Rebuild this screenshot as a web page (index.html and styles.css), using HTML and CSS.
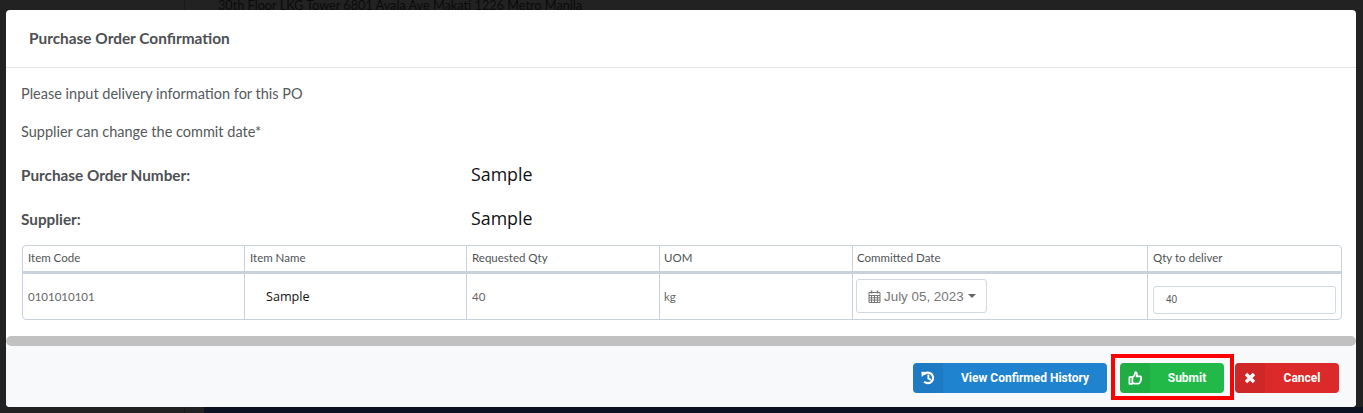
FILE: index.html
```html
<!DOCTYPE html>
<html lang="en">
<head>
  <meta charset="UTF-8" />
  <title>Purchase Order Confirmation</title>
  <meta name="viewport" content="width=device-width, initial-scale=1.0" />
  <link rel="stylesheet" href="styles.css">
</head>
<body>

<div class="backdrop">
  <div class="backdrop-top">
    <div class="backdrop-side"></div>
    <div class="backdrop-address">30th Floor LKG Tower 6801 Ayala Ave Makati 1226 Metro Manila</div>
  </div>
  <div class="backdrop-bottom">
    <div class="backdrop-side"></div>
    <div class="backdrop-gap"></div>
    <div class="backdrop-navy"></div>
  </div>
</div>

<div class="modal">
  <header class="modal-header">
    <h1>Purchase Order Confirmation</h1>
  </header>

  <section class="modal-body">
    <p class="note">Please input delivery information for this PO</p>
    <p class="note note-second">Supplier can change the commit date*</p>

    <div class="info-row info-po">
      <strong>Purchase Order Number:</strong>
      <span>Sample</span>
    </div>
    <div class="info-row info-supplier">
      <strong>Supplier:</strong>
      <span>Sample</span>
    </div>

    <table class="items">
      <thead>
        <tr>
          <th class="col-code">Item Code</th>
          <th class="col-name">Item Name</th>
          <th class="col-qty">Requested Qty</th>
          <th class="col-uom">UOM</th>
          <th class="col-date">Committed Date</th>
          <th>Qty to deliver</th>
        </tr>
      </thead>
      <tbody>
        <tr>
          <td>0101010101</td>
          <td class="cell-name">Sample</td>
          <td>40</td>
          <td class="cell-uom">kg</td>
          <td>
            <button class="date-picker" type="button">
              <svg class="cal-icon" viewBox="0 0 13 13" width="13" height="13">
                <path fill="none" stroke="#777" d="M1 2.5h11v10H1zM1 5.5h11M1 7.8h11M1 10.1h11M3.5 5.5v7M6.5 5.5v7M9.5 5.5v7"/>
                <path fill="none" stroke="#777" stroke-width="1.4" d="M3.5 0.5v3M9.5 0.5v3"/>
              </svg>
              <span>July 05, 2023</span>
              <i class="caret"></i>
            </button>
          </td>
          <td><input class="qty-input" type="text" value="40" /></td>
        </tr>
      </tbody>
    </table>
  </section>

  <div class="scrollbar"></div>

  <footer class="modal-footer">
    <button class="action action-blue" type="button">
      <span class="action-icon">
        <svg viewBox="0 0 14 14" width="14" height="14">
          <path fill="none" stroke="#fff" stroke-width="2.2" d="M2.8 3.4A5.3 5.3 0 1 1 3.2 10.8"/>
          <path fill="#fff" d="M0.4 0.8l5.4 0.2-5 5z"/>
          <path fill="none" stroke="#fff" stroke-width="1.9" d="M7.4 3.6v3.8l2.5 1.6"/>
        </svg>
      </span>
      <span class="action-label">View Confirmed History</span>
    </button>
    <button class="action action-green highlight" type="button">
      <span class="action-icon">
        <svg viewBox="0 0 14 14" width="14" height="14">
          <path fill="none" stroke="#fff" stroke-width="1.7" stroke-linejoin="round" d="M4.4 6.2h-3v6.6h3zM4.4 6.4c1.6-1 2.8-2.6 3-5.4 1.6 0 2 1.8 1.2 4.4h3.4c1.2 0 1.4 1.2 0.9 1.9 0.5 0.8 0.3 1.6-0.3 2 0.2 0.8-0.1 1.5-0.7 1.8 0 0.9-0.5 1.5-1.4 1.5H6.6c-1 0-1.4-0.5-2.2-0.6"/>
        </svg>
      </span>
      <span class="action-label">Submit</span>
    </button>
    <button class="action action-red" type="button">
      <span class="action-icon">
        <svg viewBox="0 0 12 12" width="12" height="12">
          <path fill="none" stroke="#fff" stroke-width="3.4" d="M2 2l8 8M10 2l-8 8"/>
        </svg>
      </span>
      <span class="action-label">Cancel</span>
    </button>
  </footer>
</div>

</body>
</html>
```

FILE: styles.css
```css
:root {
  --text: #55595c;
  --line: #c9d1dc;
  --blue: #2083d0;
  --green: #22b949;
  --red: #dc2a2a;
}

* {
  box-sizing: border-box;
}

html, body {
  height: 100%;
}

body {
  margin: 0;
  position: relative;
  overflow: hidden;
  background: #222;
  font-family: 'Lato', sans-serif;
  color: var(--text);
}

/* page behind the modal */
.backdrop {
  height: 413px;
  display: flex;
  flex-direction: column;
  justify-content: space-between;
}

.backdrop-top {
  display: flex;
  height: 10px;
  overflow: hidden;
}

.backdrop-side {
  width: 185px;
  border-right: 1px solid #1a1a1a;
}

.backdrop-address {
  padding-left: 33px;
  margin-top: -2px;
  font-size: 12.7px;
  line-height: 15px;
  color: #0b0b0b;
  white-space: nowrap;
}

.backdrop-bottom {
  display: flex;
  height: 6px;
}

.backdrop-gap {
  width: 19px;
}

.backdrop-navy {
  flex: 1;
  background: #0b1120;
}

.modal {
  position: absolute;
  top: 10px;
  left: 6px;
  width: 1350px;
  height: 397px;
  background: #fff;
  border-radius: 4px;
  display: flex;
  flex-direction: column;
  overflow: hidden;
}

.modal-header {
  height: 58px;
  padding: 0 23px 1px;
  display: flex;
  align-items: center;
  border-bottom: 1px solid #e2e4e7;
}

.modal-header h1 {
  margin: 0;
  font-size: 15.4px;
  font-weight: 700;
  color: #4d5053;
}

.modal-body {
  flex: 1;
  padding: 16px 15px 0 15px;
}

.note {
  margin: 0;
  font-size: 14.5px;
  line-height: 20px;
}

.note-second {
  margin-top: 18px;
}

.info-row {
  display: flex;
  align-items: center;
  font-size: 15.3px;
  line-height: 24px;
}

.info-row strong {
  width: 450px;
  color: #4d5053;
}

.info-row span {
  margin-top: -2px;
  font-family: 'Open Sans', sans-serif;
  font-size: 17.8px;
  color: #111;
}

.info-po {
  margin-top: 21px;
}

.info-supplier {
  margin-top: 20px;
}

.items {
  width: 1320px;
  margin: 14px 0 0 1px;
  border-collapse: separate;
  border-spacing: 0;
  border: 1px solid var(--line);
  border-radius: 4px;
  table-layout: fixed;
  font-size: 11.5px;
}

.items th, .items td {
  padding: 0 5px;
  text-align: left;
  border-right: 1px solid var(--line);
}

.items th:last-child, .items td:last-child {
  border-right: none;
}

.items th {
  height: 28px;
  padding-bottom: 3px;
  font-weight: 400;
  color: #505356;
  border-bottom: 3px solid var(--line);
}

.items td {
  height: 45px;
  padding-bottom: 1px;
  color: #666;
}

.col-code, .col-name {
  width: 222px;
}

.col-qty, .col-uom {
  width: 193px;
}

.col-date {
  width: 295px;
}

.items .col-uom, .items .col-date, .items .cell-uom {
  padding-left: 4px;
}

.items .cell-name {
  padding-left: 21px;
  font-family: 'Open Sans', sans-serif;
  font-size: 12.6px;
  color: #111;
}

.date-picker {
  width: 131px;
  height: 34px;
  padding: 0 0 0 11px;
  margin-left: -2px;
  display: flex;
  align-items: center;
  gap: 3px;
  background: #fff;
  border: 1px solid #d3d9e0;
  border-radius: 3px;
  font-family: 'Liberation Sans', sans-serif;
  font-size: 13.4px;
  color: #777;
}

.caret {
  margin-left: 1px;
  border-left: 4px solid transparent;
  border-right: 4px solid transparent;
  border-top: 4px solid #666;
}

.qty-input {
  display: block;
  width: 183px;
  height: 28px;
  margin-top: 7px;
  padding: 0 12px;
  border: 1px solid #d3d9e0;
  border-radius: 3px;
  font-family: 'Liberation Sans', sans-serif;
  font-size: 10px;
  color: #555;
}

.scrollbar {
  height: 10px;
  background: #c1c1c1;
  border-radius: 5px;
}

.modal-footer {
  height: 61px;
  padding: 3px 17px 0 0;
  display: flex;
  justify-content: flex-end;
  align-items: center;
  gap: 11px;
  background: #f8f9fb;
}

.action {
  position: relative;
  display: flex;
  align-items: stretch;
  height: 30px;
  padding: 0;
  border: none;
  border-radius: 4px;
  font-family: 'Roboto', sans-serif;
  font-size: 12px;
  font-weight: 700;
  color: #fff;
}

.action-icon {
  width: 30px;
  display: flex;
  align-items: center;
  justify-content: center;
  border-radius: 4px 0 0 4px;
  background: rgba(0, 0, 0, 0.06);
}

.action-label {
  flex: 1;
  display: flex;
  align-items: center;
  justify-content: center;
}

.action-blue {
  width: 194px;
  margin-right: 2px;
  background: var(--blue);
}

.action-green {
  width: 104px;
  background: var(--green);
}

.action-red {
  width: 104px;
  background: var(--red);
}

/* red annotation box round the submit button */
.highlight::after {
  content: "";
  position: absolute;
  top: -9px;
  left: -9px;
  right: -10px;
  bottom: -7px;
  border: 4px solid #f00;
}
```
